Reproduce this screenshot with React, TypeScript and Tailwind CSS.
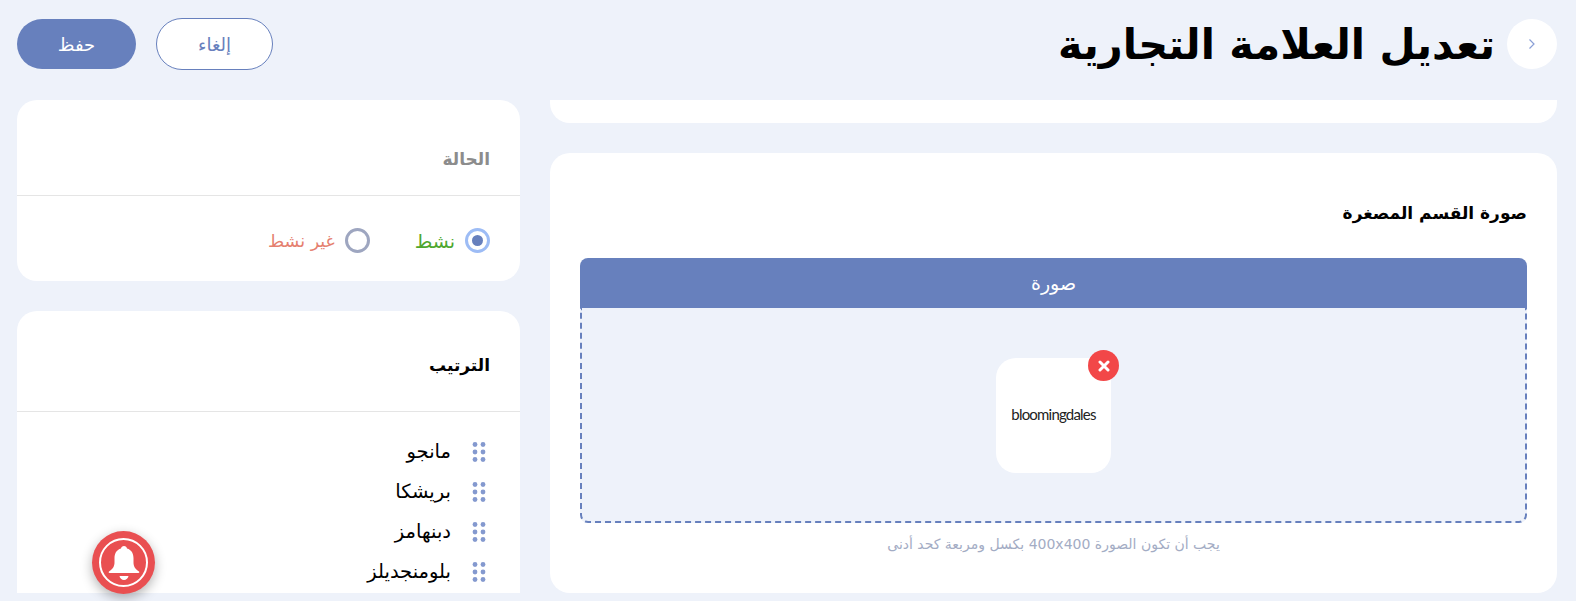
const arabicFont = "font-['DejaVu_Sans',sans-serif]";

const brands = ["مانجو", "بريشكا", "دبنهامز", "بلومنجديلز"];

function DragDots() {
  return (
    <svg width="14" height="20" viewBox="0 0 14 20" className="shrink-0" fill="#8499cf">
      <circle cx="3" cy="2.5" r="2.4" />
      <circle cx="11" cy="2.5" r="2.4" />
      <circle cx="3" cy="10" r="2.4" />
      <circle cx="11" cy="10" r="2.4" />
      <circle cx="3" cy="17.5" r="2.4" />
      <circle cx="11" cy="17.5" r="2.4" />
    </svg>
  );
}

function Bell() {
  return (
    <svg width="32" height="36" viewBox="0 0 32 36" fill="#fff">
      <path d="M16 1c1.600 0 2.800 1 3 2.500 4.600 1.300 6.500 5 6.500 9.800v4c0 4 1.500 6.700 5.500 9.200.6.400.4 1.500-.6 1.500H1.600c-1 0-1.200-1.100-.6-1.500 4-2.500 5.500-5.200 5.500-9.200v-4c0-4.800 1.900-8.500 6.500-9.800C13.200 2 14.400 1 16 1z" />
      <path d="M11.500 31h9c-.3 2.300-2.200 4-4.500 4s-4.200-1.700-4.500-4z" />
    </svg>
  );
}

export default function App() {
  return (
    <div dir="rtl" className={`h-[601px] w-full overflow-hidden bg-[#eef2fa] pr-[19px] pl-[17px] ${arabicFont}`}>
      {/* Header */}
      <div className="h-[100px] pt-[18px] flex justify-between">
        <div className="flex items-start gap-[12px]">
          <button className="mt-px w-[50px] h-[50px] rounded-full bg-white flex items-center justify-center">
            <svg width="8" height="12" viewBox="0 0 8 12" fill="none" stroke="#8a9fd6" strokeWidth="1.200">
              <path d="M1.500 1.500 6 6l-4.500 4.500" />
            </svg>
          </button>
          <h1 className="text-[41.500px] leading-[54px] font-bold text-black">تعديل العلامة التجارية</h1>
        </div>
        <div className="flex items-start gap-[20px]">
          <button className="w-[117px] h-[52px] rounded-full border border-[#6780bd] bg-white text-[18px] text-[#6780bd]">إلغاء</button>
          <button className="mt-px w-[119px] h-[50px] rounded-full bg-[#6780bd] text-[18px] text-white">حفظ</button>
        </div>
      </div>

      <div className="h-[493px] flex gap-[30px]">
        {/* Main column */}
        <div className="flex-1 min-w-0 flex flex-col justify-end gap-[30px] overflow-hidden">
          <div className="h-[23px] shrink-0 bg-white rounded-b-[20px]" />
          <div className="h-[440px] shrink-0 bg-white rounded-[20px] px-[30px] pt-[46px]">
            <h2 className="text-[17px] leading-[28px] font-bold text-black">صورة القسم المصغرة</h2>
            <div className="mt-[31px] h-[50px] rounded-t-[8px] bg-[#6780bd] flex items-center justify-center text-[19px] text-white">صورة</div>
            <div className="h-[215px] pt-[2px] rounded-b-[8px] border-2 border-t-0 border-dashed border-[#6780bd] bg-[#eef2fa] flex items-center justify-center">
              <div className="relative w-[115px] h-[115px] rounded-[20px] bg-white flex items-center justify-center">
                <span dir="ltr" className="-mt-[2px] font-['Lato',sans-serif] text-[15px] tracking-[-0.8px] text-[#222]">bloomingdales</span>
                <span className="absolute -top-[8px] -right-[8px] w-[31px] h-[31px] rounded-full bg-[#f24748] flex items-center justify-center">
                  <svg width="12" height="12" viewBox="0 0 12 12" stroke="#fff" strokeWidth="3" strokeLinecap="round">
                    <path d="M2 2l8 8M10 2l-8 8" />
                  </svg>
                </span>
              </div>
            </div>
            <p className="mt-[11px] text-center text-[14px] leading-[20px] text-[#a3acc4]">يجب أن تكون الصورة 400x400 بكسل ومربعة كحد أدنى</p>
          </div>
        </div>

        {/* Side column */}
        <div className="w-[503px] shrink-0 flex flex-col gap-[30px] overflow-hidden">
          <div className="h-[181px] shrink-0 bg-white rounded-[20px]">
            <div className="h-[96px] border-b border-[#e5e5e5] px-[30px] pt-[46px]">
              <h3 className="text-[17px] leading-[26px] font-bold text-[#8c8c8c]">الحالة</h3>
            </div>
            <div className="flex items-center gap-[45px] px-[30px] pt-[32px]">
              <label className="flex items-center gap-[10px]">
                <span className="w-[25px] h-[25px] rounded-full border-[3px] border-[#9dbcf5] flex items-center justify-center">
                  <span className="w-[11px] h-[11px] rounded-full bg-[#6780bd]" />
                </span>
                <span className="text-[19px] leading-[24px] text-[#4ea72e]">نشط</span>
              </label>
              <label className="flex items-center gap-[10px]">
                <span className="w-[25px] h-[25px] rounded-full border-[3px] border-[#9ea6c0]" />
                <span className="text-[17.500px] leading-[24px] text-[#e5806f]">غير نشط</span>
              </label>
            </div>
          </div>

          <div className="flex-1 bg-white rounded-t-[20px]">
            <div className="h-[101px] border-b border-[#e5e5e5] px-[30px] pt-[41px]">
              <h3 className="text-[17px] leading-[26px] font-bold text-black">الترتيب</h3>
            </div>
            <ul className="pr-[34px] pt-[20px]">
              {brands.map((brand) => (
                <li key={brand} className="h-[40px] flex items-center gap-[21px] text-[19.500px] text-black">
                  <DragDots />
                  <span>{brand}</span>
                </li>
              ))}
            </ul>
          </div>
        </div>
      </div>

      {/* Notification bell */}
      <div className="fixed left-[92px] top-[531px] w-[63px] h-[63px] rounded-full bg-[#e94f51] shadow-[0_4px_12px_rgba(0,0,0,0.3)] flex items-center justify-center">
        <div className="w-[49px] h-[49px] rounded-full border-2 border-white flex items-center justify-center">
          <Bell />
        </div>
      </div>
    </div>
  );
}
